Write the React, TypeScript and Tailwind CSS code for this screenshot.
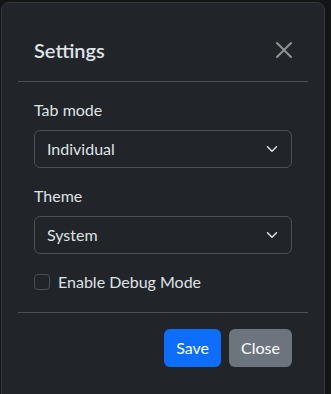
import { useState } from "react";

function Chevron() {
  return (
    <svg
      className="pointer-events-none absolute right-3 top-1/2 h-3 w-4 -translate-y-1/2"
      viewBox="0 0 16 16"
      fill="none"
      stroke="#dee2e6"
      strokeWidth="2"
      strokeLinecap="round"
      strokeLinejoin="round"
    >
      <path d="M2 5l6 6 6-6" />
    </svg>
  );
}

function SelectField({ label, value, options }: { label: string; value: string; options: string[] }) {
  return (
    <div className="mb-4">
      <label className="mb-2 block leading-6">{label}</label>
      <div className="relative">
        <select
          defaultValue={value}
          className="block h-[38px] w-full appearance-none rounded-md border border-[#495057] bg-[#212529] pl-3 pr-9 text-base leading-6 text-[#dee2e6] outline-none"
        >
          {options.map((o) => (
            <option key={o}>{o}</option>
          ))}
        </select>
        <Chevron />
      </div>
    </div>
  );
}

export default function App() {
  const [debug, setDebug] = useState(false);

  return (
    <div
      className="h-[394px] w-[331px] overflow-hidden bg-[#141516] pl-px pt-[2px] text-base text-[#dee2e6]"
      style={{ fontFamily: "Lato, 'Liberation Sans', sans-serif" }}
    >
      <div className="h-[400px] w-[324px] rounded-t-lg border border-[#34373b] bg-[#212529] p-4">
        {/* header */}
        <div className="flex items-center justify-between border-b border-[#495057] p-4">
          <h5 className="text-xl font-semibold leading-[30px] text-[#dee2e6]">Settings</h5>
          <button className="-my-2 -mr-2 flex h-8 w-8 items-center justify-center opacity-50">
            <svg viewBox="0 0 16 16" className="h-4 w-4" fill="#fff">
              <path d="M.293.293a1 1 0 0 1 1.414 0L8 6.586 14.293.293a1 1 0 1 1 1.414 1.414L9.414 8l6.293 6.293a1 1 0 0 1-1.414 1.414L8 9.414l-6.293 6.293a1 1 0 0 1-1.414-1.414L6.586 8 .293 1.707a1 1 0 0 1 0-1.414z" />
            </svg>
          </button>
        </div>

        {/* body */}
        <div className="p-4">
          <SelectField label="Tab mode" value="Individual" options={["Individual", "Grouped"]} />
          <SelectField label="Theme" value="System" options={["System", "Light", "Dark"]} />
          <label className="mb-0.5 flex h-6 items-center gap-2">
            <input
              type="checkbox"
              checked={debug}
              onChange={(e) => setDebug(e.target.checked)}
              className="h-4 w-4 appearance-none rounded border border-[#495057] bg-[#212529] checked:bg-[#0d6efd]"
            />
            <span className="leading-6">Enable Debug Mode</span>
          </label>
        </div>

        {/* footer */}
        <div className="flex justify-end gap-2 border-t border-[#495057] p-4">
          <button className="h-[38px] rounded-md bg-[#0d6efd] px-3 leading-6 text-white">Save</button>
          <button className="h-[38px] rounded-md bg-[#6c757d] px-3 leading-6 text-white">Close</button>
        </div>
      </div>
    </div>
  );
}
